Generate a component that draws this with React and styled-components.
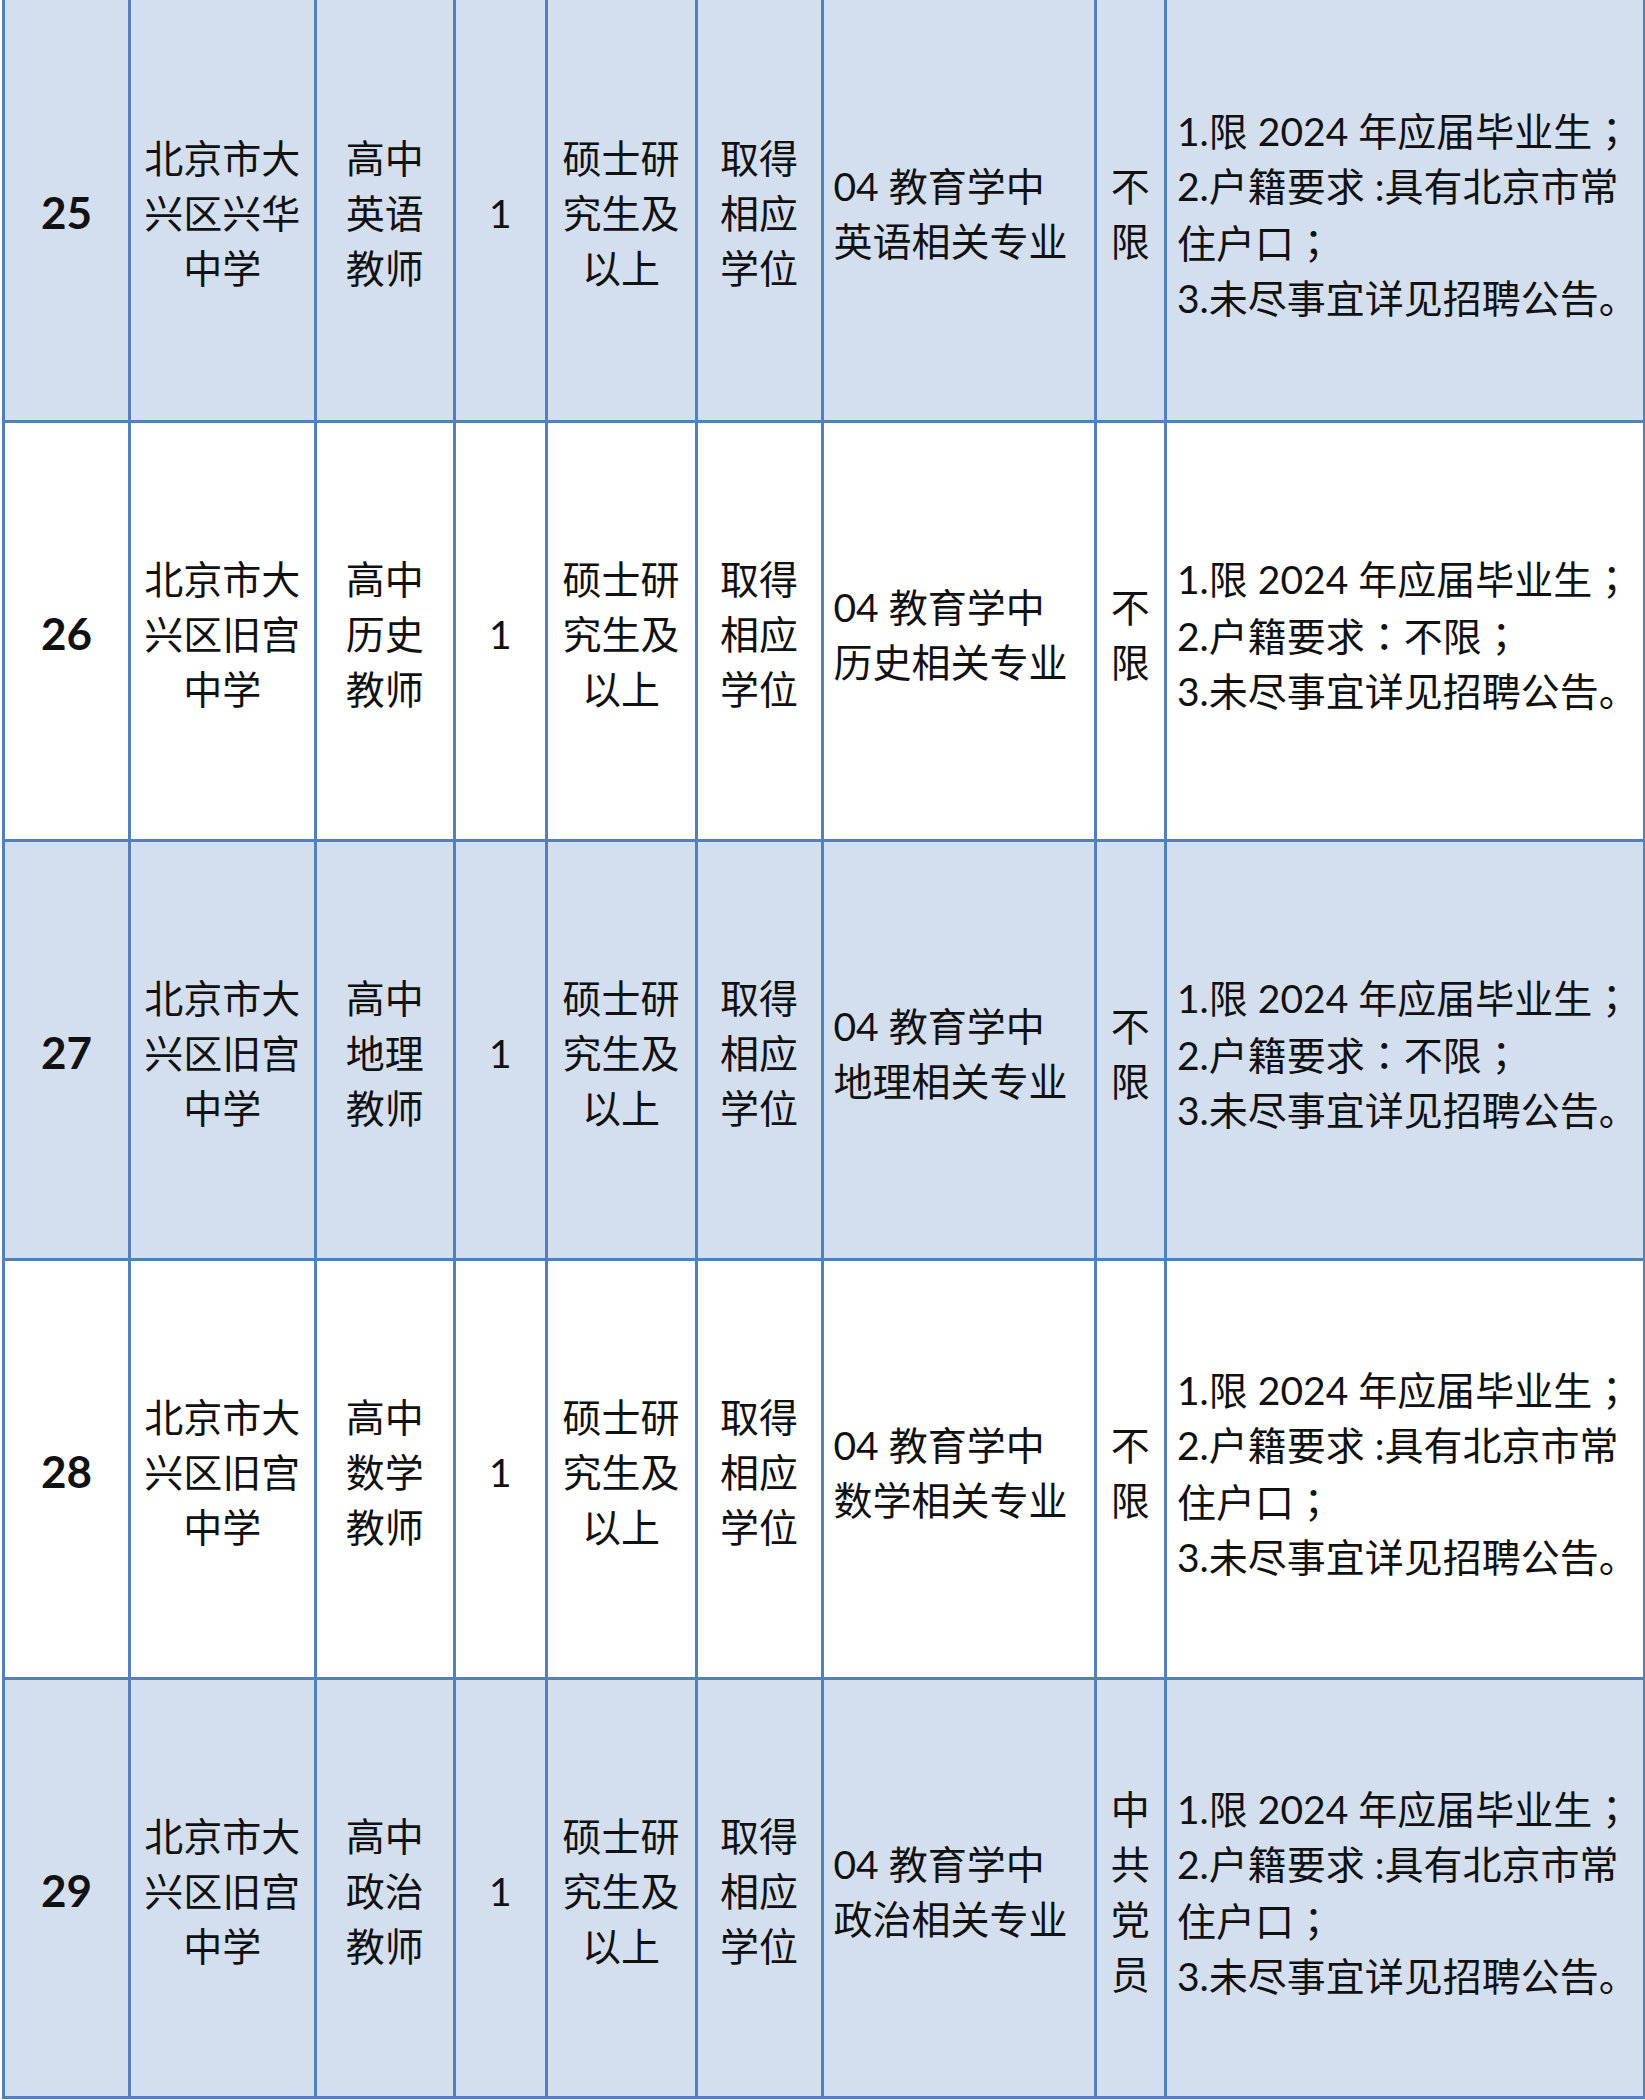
import React from "react";
import styled, { createGlobalStyle } from "styled-components";

const GlobalStyle = createGlobalStyle`
  html, body {
    margin: 0;
    padding: 0;
    background: #ffffff;
  }
`;

const Page = styled.div`
  width: 1645px;
  padding-left: 2px;
  box-sizing: border-box;
`;

const Table = styled.table`
  border-collapse: collapse;
  table-layout: fixed;
  width: 1641px;
  font-family: Lato, "Noto Sans CJK SC", sans-serif;
  color: #111111;
`;

const Col = styled.col`
  width: ${(p) => p.$w}px;
`;

const Row = styled.tr`
  height: ${(p) => p.$h}px;
  background-color: ${(p) => (p.$shaded ? "#d3dfee" : "#ffffff")};

  &:first-child td {
    border-top: none;
  }
`;

const Cell = styled.td`
  border: 3px solid #5380ba;
  vertical-align: middle;
  padding: 8px ${(p) => (p.$left ? "4px" : "0")} 0
    ${(p) => (p.$left ? "10px" : "0")};
  text-align: ${(p) => (p.$left ? "left" : "center")};
  font-size: 39px;
  line-height: 55px;
  overflow: hidden;
`;

const Num = styled.span`
  font-size: 44px;
  font-weight: 700;
`;

const Line = styled.div`
  white-space: nowrap;
`;

// full-width punctuation centred in its box, as in the source document
const Punct = styled.span`
  font-family: "Noto Sans CJK TC", sans-serif;
`;

const withPunct = (text) =>
  text.split(/([；：])/).map((part, i) =>
    part === "；" || part === "：" ? <Punct key={i}>{part}</Punct> : part
  );

const remarkLocal = [
  "1.限 2024 年应届毕业生；",
  "2.户籍要求 :具有北京市常",
  "住户口；",
  "3.未尽事宜详见招聘公告。",
];

const remarkAny = [
  "1.限 2024 年应届毕业生；",
  "2.户籍要求：不限；",
  "3.未尽事宜详见招聘公告。",
];

const rows = [
  {
    no: "25",
    school: ["北京市大", "兴区兴华", "中学"],
    subject: "英语",
    politics: ["不", "限"],
    remarks: remarkLocal,
  },
  {
    no: "26",
    school: ["北京市大", "兴区旧宫", "中学"],
    subject: "历史",
    politics: ["不", "限"],
    remarks: remarkAny,
  },
  {
    no: "27",
    school: ["北京市大", "兴区旧宫", "中学"],
    subject: "地理",
    politics: ["不", "限"],
    remarks: remarkAny,
  },
  {
    no: "28",
    school: ["北京市大", "兴区旧宫", "中学"],
    subject: "数学",
    politics: ["不", "限"],
    remarks: remarkLocal,
  },
  {
    no: "29",
    school: ["北京市大", "兴区旧宫", "中学"],
    subject: "政治",
    politics: ["中", "共", "党", "员"],
    remarks: remarkLocal,
  },
];

const colWidths = [126, 185.5, 139.5, 91.5, 150, 126, 273, 70.5, 479];

const Lines = ({ items }) =>
  items.map((t, i) => <Line key={i}>{withPunct(t)}</Line>);

const App = () => {
  return (
    <Page>
      <GlobalStyle />
      <Table>
        <colgroup>
          {colWidths.map((w, i) => (
            <Col key={i} $w={w} />
          ))}
        </colgroup>
        <tbody>
          {rows.map((r, i) => (
            <Row key={r.no} $shaded={i % 2 === 0} $h={i === 0 ? 421 : 419}>
              <Cell>
                <Num>{r.no}</Num>
              </Cell>
              <Cell>
                <Lines items={r.school} />
              </Cell>
              <Cell>
                <Lines items={["高中", r.subject, "教师"]} />
              </Cell>
              <Cell>1</Cell>
              <Cell>
                <Lines items={["硕士研", "究生及", "以上"]} />
              </Cell>
              <Cell>
                <Lines items={["取得", "相应", "学位"]} />
              </Cell>
              <Cell $left>
                <Lines items={["04 教育学中", r.subject + "相关专业"]} />
              </Cell>
              <Cell>
                <Lines items={r.politics} />
              </Cell>
              <Cell $left>
                <Lines items={r.remarks} />
              </Cell>
            </Row>
          ))}
        </tbody>
      </Table>
    </Page>
  );
};

export default App;
